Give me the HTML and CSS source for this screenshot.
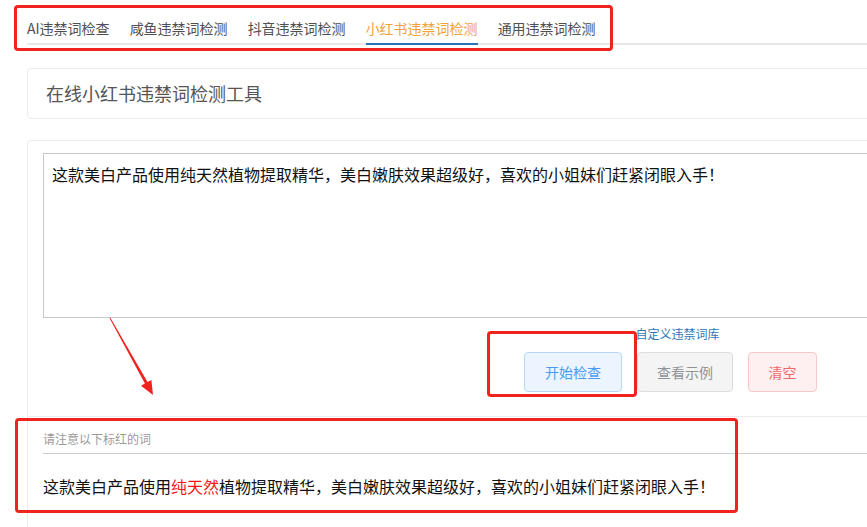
FILE: index.html
```html
<!DOCTYPE html>
<html lang="zh-CN">
<head>
    <meta charset="UTF-8">
    <meta name="viewport" content="width=device-width, initial-scale=1.0">
    <title>小红书违禁词检测</title>
    <link rel="stylesheet" href="styles.css">
</head>
<body>
    <div class="page">
        <!-- 顶部标签 -->
        <div class="tabs">
            <a class="tab-item" href="javascript:;">AI违禁词检查</a>
            <a class="tab-item" href="javascript:;">咸鱼违禁词检测</a>
            <a class="tab-item" href="javascript:;">抖音违禁词检测</a>
            <a class="tab-item active" href="javascript:;">小红书违禁词检测</a>
            <a class="tab-item" href="javascript:;">通用违禁词检测</a>
        </div>

        <div class="card title-card">在线小红书违禁词检测工具</div>

        <div class="card check-card">
            <textarea class="check-input">这款美白产品使用纯天然植物提取精华，美白嫩肤效果超级好，喜欢的小姐妹们赶紧闭眼入手！</textarea>
            <div class="custom-row">
                <a class="custom-link" href="javascript:;">自定义违禁词库</a>
            </div>
            <div class="btn-row">
                <button class="btn btn-primary">开始检查</button>
                <button class="btn btn-info">查看示例</button>
                <button class="btn btn-danger">清空</button>
            </div>
        </div>

        <div class="result">
            <div class="result-tip">请注意以下标红的词</div>
            <div class="result-text">这款美白产品使用<span class="hit">纯天然</span>植物提取精华，美白嫩肤效果超级好，喜欢的小姐妹们赶紧闭眼入手！</div>
        </div>
    </div>

    <!-- 标注层 -->
    <div class="mark mark-tabs"></div>
    <div class="mark mark-btn"></div>
    <div class="mark mark-result"></div>
    <svg class="mark-arrow" width="867" height="527" viewBox="0 0 867 527">
        <polygon points="109.6,318.2 110.4,317.8 147.5,382.1 151.4,379.9 153,395 141,385.7 144.9,383.5" fill="#f0231e"/>
    </svg>
</body>
</html>
```

FILE: styles.css
```css
* {
    box-sizing: border-box;
}

html,
body {
    margin: 0;
    padding: 0;
    overflow: hidden;
    background-color: #ffffff;
}

body {
    font-family: "Noto Sans CJK SC", "Noto Sans", "Liberation Sans", sans-serif;
    color: #222;
}

a {
    text-decoration: none;
}

.page {
    width: 1314px;
    padding-left: 27px;
}

/* 标签栏 */
.tabs {
    display: flex;
    border-bottom: 2px solid #e6e8ec;
}

.tab-item {
    margin-right: 20px;
    margin-bottom: -2px;
    padding: 20px 0 7px;
    font-size: 14px;
    line-height: 16px;
    color: #505050;
    border-bottom: 2px solid transparent;
}

.tab-item.active {
    color: #f2a23a;
    border-bottom-color: #2a72b5;
}

/* 卡片 */
.card {
    border: 1px solid #ebebeb;
    border-radius: 4px;
    background-color: #ffffff;
}

.title-card {
    margin-top: 23px;
    padding: 0 18px;
    height: 51px;
    line-height: 49px;
    font-size: 18px;
    color: #555;
}

.check-card {
    margin-top: 21px;
    padding: 12px 15px 24px;
    border-radius: 4px 4px 0 0;
}

.check-input {
    display: block;
    width: 100%;
    height: 165px;
    padding: 8px 8px;
    font-family: inherit;
    font-size: 16px;
    line-height: 24px;
    color: #111;
    border: 1px solid #c8c8c8;
    resize: none;
    outline: none;
}

.custom-row {
    display: flex;
    justify-content: center;
    margin-top: 8px;
    padding-left: 14px;
}

.custom-link {
    font-size: 12px;
    line-height: 16px;
    color: #2f78b8;
}

.btn-row {
    display: flex;
    justify-content: center;
    gap: 15px;
    margin-top: 10px;
}

.btn {
    height: 40px;
    padding: 0;
    font-family: inherit;
    font-size: 14px;
    white-space: nowrap;
    border-radius: 4px;
    border: 1px solid;
    cursor: pointer;
}

.btn-primary {
    width: 98px;
    color: #4a9af5;
    background-color: #ecf5ff;
    border-color: #b9d8f7;
}

.btn-info {
    width: 96px;
    color: #8f9196;
    background-color: #f4f4f5;
    border-color: #dcdde0;
}

.btn-danger {
    width: 69px;
    color: #f0696c;
    background-color: #fef0f0;
    border-color: #f8c9c9;
}

/* 检测结果 */
.result {
    border-left: 1px solid #ebebeb;
    margin-top: -1px;
    border-top: 1px solid #ebebeb;
    padding: 14px 0 40px 15px;
}

.result-tip {
    padding-bottom: 6px;
    font-size: 12px;
    line-height: 16px;
    color: #9a9a9a;
    border-bottom: 1px solid #cfcfcf;
}

.result-text {
    margin-top: 20px;
    font-size: 16px;
    line-height: 24px;
    color: #111;
}

.result-text .hit {
    color: #f01818;
}

/* 红色标注 */
.mark {
    position: absolute;
    border: 3px solid #f0231e;
    border-radius: 4px;
}

.mark-tabs {
    left: 14px;
    top: 5px;
    width: 599px;
    height: 46px;
}

.mark-btn {
    left: 487px;
    top: 331px;
    width: 150px;
    height: 66px;
}

.mark-result {
    left: 15px;
    top: 418px;
    width: 723px;
    height: 95px;
}

.mark-arrow {
    position: absolute;
    left: 0;
    top: 0;
}
```
